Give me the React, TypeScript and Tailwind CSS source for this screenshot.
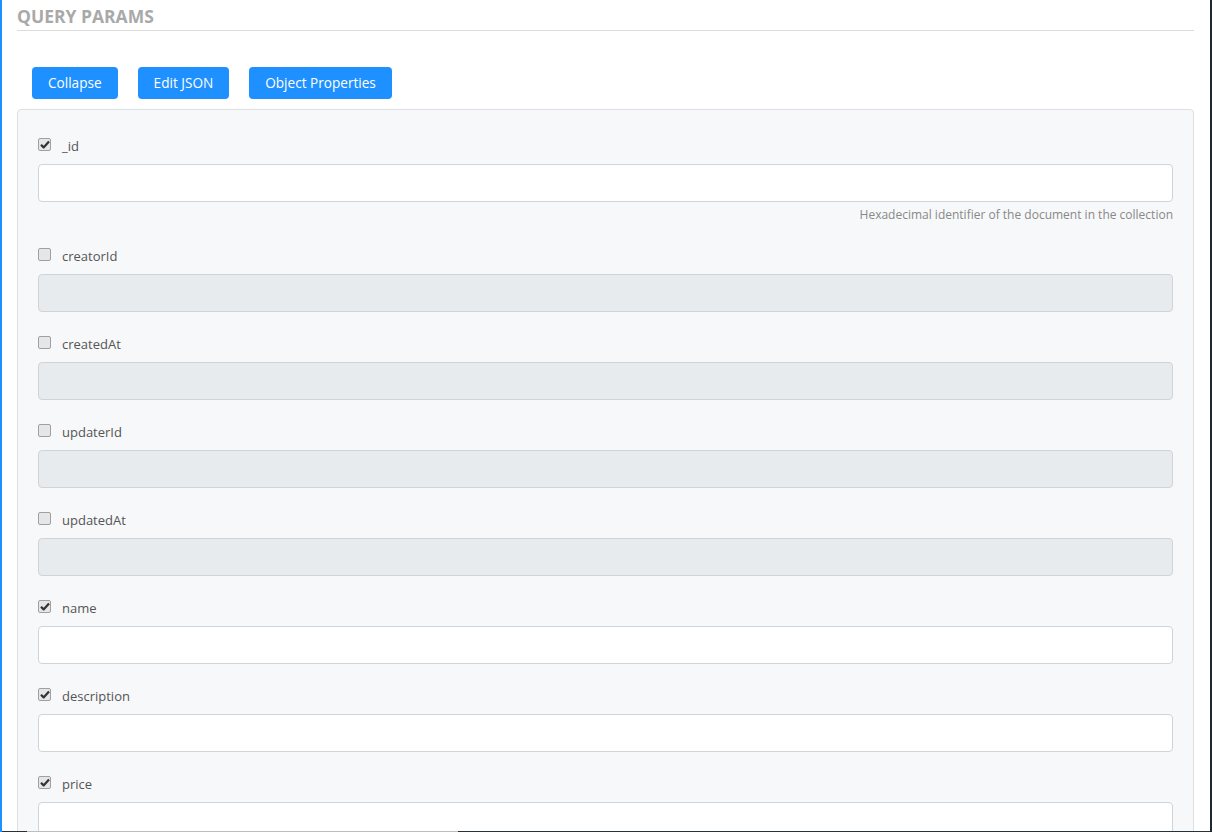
import React from 'react';

type Field = { key: string; checked: boolean; help?: string };

const FIELDS: Field[] = [
  { key: '_id', checked: true, help: 'Hexadecimal identifier of the document in the collection' },
  { key: 'creatorId', checked: false },
  { key: 'createdAt', checked: false },
  { key: 'updaterId', checked: false },
  { key: 'updatedAt', checked: false },
  { key: 'name', checked: true },
  { key: 'description', checked: true },
  { key: 'price', checked: true },
];

function Check({ checked }: { checked: boolean }) {
  return (
    <span className="w-[13px] h-[13px] shrink-0 rounded-[2px] border border-[#a0a0a0] bg-[#e6e6e6] flex items-center justify-center">
      {checked && (
        <svg width="10" height="9" viewBox="0 0 10 9">
          <path d="M1 4.8 L3.6 7.4 L9 1.4" fill="none" stroke="#333" strokeWidth="2.2" strokeLinejoin="round" />
        </svg>
      )}
    </span>
  );
}

export default function App() {
  return (
    <div className="h-[832px] overflow-hidden bg-white border-l-2 border-l-[#1e90ff] border-r-2 border-r-[#1f2a30] font-['Open_Sans',sans-serif] relative">
      <div className="pl-[15px] pr-[16px]">
        <h2 className="pt-[6px] pb-[3px] text-[17.5px] leading-[21px] font-bold text-[#a9a9a9] border-b border-[#dcdcdc]">
          QUERY PARAMS
        </h2>

        {/* toolbar */}
        <div className="flex gap-5 pl-[15px] mt-[36px] mb-[10px]">
          {['Collapse', 'Edit JSON', 'Object Properties'].map((b) => (
            <button key={b} type="button"
              className="h-8 px-4 rounded-[4px] bg-[#1e90ff] text-white text-[13.6px] leading-none">
              {b}
            </button>
          ))}
        </div>

        {/* fields */}
        <div className="bg-[#f7f8fa] border border-[#dcdfe3] rounded-[4px] px-[20px] pt-[27px]">
          {FIELDS.map((f) => (
            <div key={f.key} className="mb-[23px]">
              <label className="flex items-center gap-[11px] h-5 text-[13px] text-[#555]">
                <span className="-mt-[6px]"><Check checked={f.checked} /></span>
                <span>{f.key}</span>
              </label>
              <input type="text" disabled={!f.checked}
                className={`block w-full mt-[7px] h-[38px] rounded-[4px] border border-[#ced4da] outline-none ${f.checked ? 'bg-white' : 'bg-[#e8ebee]'}`} />
              {f.help && (
                <p className="mt-1 text-right text-[12px] leading-[18px] text-[#888]">{f.help}</p>
              )}
            </div>
          ))}
        </div>
      </div>

      {/* scroll bar edge */}
      <div className="absolute left-0 right-0 bottom-0 h-px flex">
        <span className="w-[25px] bg-[#263238]" />
        <span className="w-[431px] bg-[#bdbdbd]" />
        <span className="flex-1 bg-[#263238]" />
      </div>
    </div>
  );
}
